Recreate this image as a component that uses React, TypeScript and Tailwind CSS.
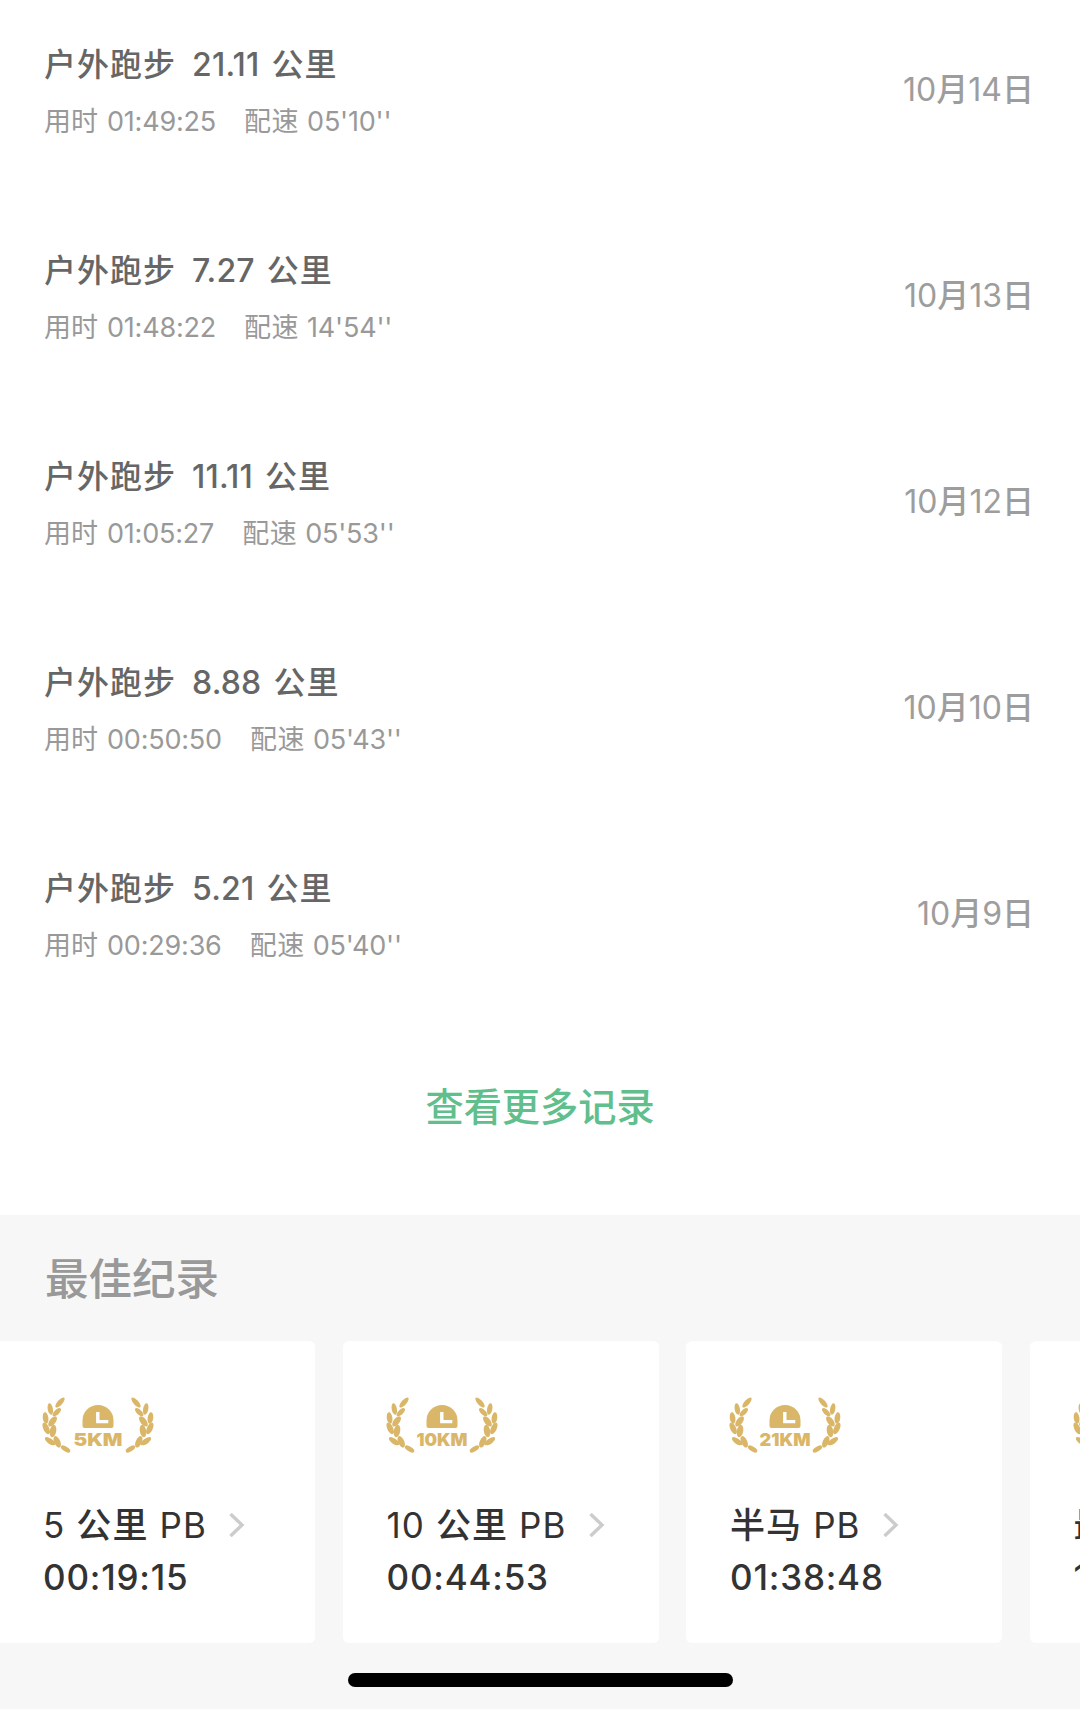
import { FC } from 'react';
import { clsx } from 'clsx';

interface Run {
  distance: string;
  duration: string;
  pace: string;
  date: string;
}

interface Best {
  badge: string;
  title: string;
  value: string;
}

const runs: Run[] = [
  { distance: '21.11', duration: '01:49:25', pace: "05'10''", date: '10月14日' },
  { distance: '7.27', duration: '01:48:22', pace: "14'54''", date: '10月13日' },
  { distance: '11.11', duration: '01:05:27', pace: "05'53''", date: '10月12日' },
  { distance: '8.88', duration: '00:50:50', pace: "05'43''", date: '10月10日' },
  { distance: '5.21', duration: '00:29:36', pace: "05'40''", date: '10月9日' },
];

const bests: Best[] = [
  { badge: '5KM', title: '5 公里 PB', value: '00:19:15' },
  { badge: '10KM', title: '10 公里 PB', value: '00:44:53' },
  { badge: '21KM', title: '半马 PB', value: '01:38:48' },
  { badge: 'MAX', title: '最长距离', value: '10:00' },
];

// cx, cy, rx, ry, rotation
const leaves = [
  [18, 6.5, 2.5, 6.4, 42],
  [8.3, 13, 2.6, 5.8, -10],
  [14.8, 16.2, 2.5, 5.4, 46],
  [3.6, 22, 2.8, 5.8, -8],
  [10.6, 25.4, 3, 6, 38],
  [4.2, 32.4, 2.9, 6.2, -26],
  [11, 35, 3.2, 6.4, 10],
  [8, 45.2, 2.7, 6, -55],
  [15.2, 45.8, 3, 6.2, -24],
  [23.6, 53, 2.4, 5.3, -58],
];

const Laurel: FC = () => (
  <g>
    {leaves.map(([cx, cy, rx, ry, angle]) => (
      <ellipse
        key={`${cx}-${cy}`}
        cx={cx}
        cy={cy}
        rx={rx}
        ry={ry}
        transform={`rotate(${angle} ${cx} ${cy})`}
      />
    ))}
  </g>
);

const Badge: FC<{ label: string }> = ({ label }) => (
  <svg
    className="block h-[58px] w-28 shrink-0"
    viewBox="0 0 112 58"
    fill="#dab668"
  >
    <Laurel />
    <g transform="translate(112 0) scale(-1 1)">
      <Laurel />
    </g>
    <path d="M40.5 30V24.5a15.5 15.5 0 0 1 31 0V30a2 2 0 0 1-2 2H42.5a2 2 0 0 1-2-2Z" />
    <path d="M55.8 16v9.6h10.5" fill="none" stroke="#fff" strokeWidth="3.4" />
    <text
      x="56"
      y="50"
      textAnchor="middle"
      textLength={label.length > 3 ? 51 : 49}
      lengthAdjust="spacingAndGlyphs"
      className="font-[Inter] text-[18px] font-black"
    >
      {label}
    </text>
  </svg>
);

// Chinese glyphs are set one weight heavier than latin ones
const Mixed: FC<{ text: string }> = ({ text }) => (
  <span className="whitespace-pre">
    {text.split(/([\u4e00-\u9fff]+)/).map((part, i) => (
      <span key={i} className={i % 2 ? 'font-medium' : 'font-normal'}>
        {part}
      </span>
    ))}
  </span>
);

const RunRow: FC<{ run: Run }> = ({ run }) => (
  <li className="flex h-[206px] items-start justify-between pr-[46px] pl-11">
    <div>
      <div className="flex h-12 items-center text-[32px] font-medium tracking-[1px] text-[#666]">
        <span>户外跑步</span>
        <span className="ml-4 tracking-[0.2px]">{run.distance}</span>
        <span className="ml-3">公里</span>
      </div>
      <div className="mt-2 flex h-12 items-center text-[27px] text-[#999]">
        <span>用时</span>
        <span className="ml-[9px] tracking-[-0.2px]">{run.duration}</span>
        <span className="ml-7 tracking-[0.5px]">配速</span>
        <span className="ml-2 tracking-[-0.2px]">{run.pace}</span>
      </div>
    </div>
    <div className="mt-[25px] flex h-12 items-center text-[32px] text-[#9d9d9d]">
      <Mixed text={run.date} />
    </div>
  </li>
);

const BestCard: FC<{ best: Best; first: boolean }> = ({ best, first }) => (
  <li
    className={clsx(
      'flex h-[302px] shrink-0 flex-col rounded-md bg-white pt-[55px]',
      first ? 'w-[315px] rounded-l-none pl-[42px]' : 'w-[316px] pl-[43px]'
    )}
  >
    <Badge label={best.badge} />
    <div className="mt-[46px] ml-px flex h-[50px] items-center text-[35px] tracking-[1.1px] text-[#333]">
      <Mixed text={best.title} />
      <svg
        className="ml-[22px] h-6 w-4"
        viewBox="0 0 16 24"
        fill="none"
        stroke="#ccc"
        strokeWidth="3.4"
      >
        <path d="m1.5 1 11.5 11-11.5 11" />
      </svg>
    </div>
    <div className="mt-px ml-px flex h-[52px] items-center text-[35px] font-medium tracking-[0.8px] text-[#333]">
      {best.value}
    </div>
  </li>
);

export default function App() {
  return (
    <main className="flex h-[1709px] w-[1080px] flex-col overflow-hidden bg-white font-['Inter','Noto_Sans_CJK_SC',sans-serif] leading-none">
      <ul className="pt-[41px]">
        {runs.map((run) => (
          <RunRow key={run.date} run={run} />
        ))}
      </ul>
      <button className="mt-3 flex h-12 items-center justify-center text-[38.2px] font-medium text-[#61be8d]">
        查看更多记录
      </button>
      <section className="mt-[84px] flex flex-1 flex-col bg-[#f7f7f7]">
        <h2 className="mt-[37px] flex h-14 items-center pl-[45px] text-[43.5px] font-medium text-[#999]">
          最佳纪录
        </h2>
        <ul className="mt-[33px] flex gap-[27.5px]">
          {bests.map((best, i) => (
            <BestCard key={best.badge} best={best} first={i === 0} />
          ))}
        </ul>
        <div className="mt-[30px] h-3.5 w-[385px] self-center rounded-full bg-black" />
      </section>
    </main>
  );
}
